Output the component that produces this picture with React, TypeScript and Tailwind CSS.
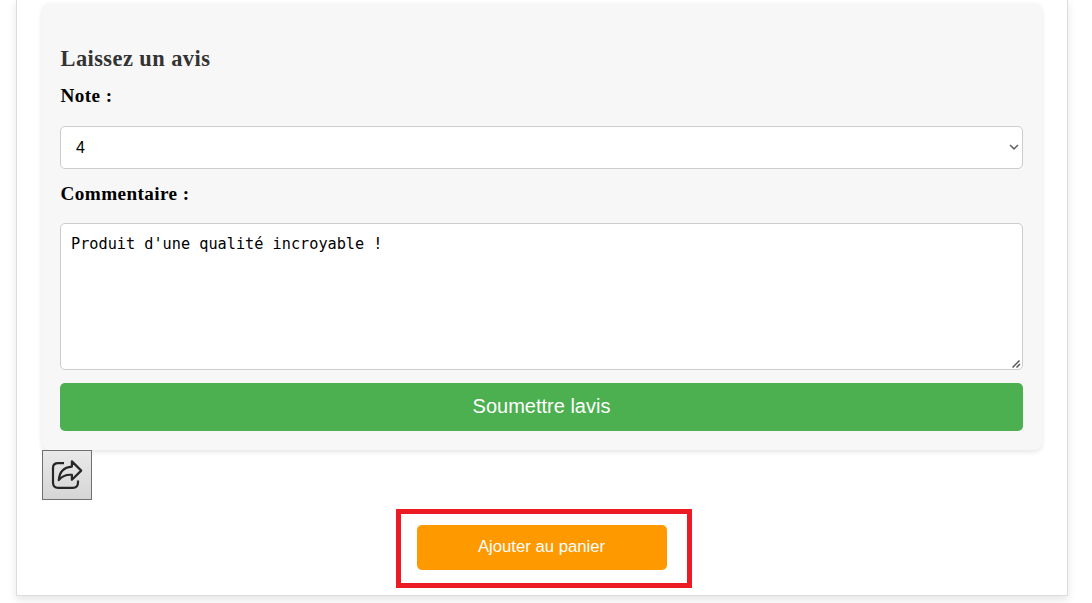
import { useState } from "react";

function ShareIcon() {
  return (
    <svg width="32" height="32" viewBox="0 0 32 32" fill="none" stroke="#262626" strokeWidth="2.2" strokeLinejoin="round" strokeLinecap="butt">
      <path d="M13 4.2H7.2C3.6 4.2 2 6 2 9V23.5C2 27 3.8 28.9 7.2 28.9H21.8C25.3 28.9 27 27 27 23.5V21.5" />
      <path d="M20.9 2.4L30.2 11.6L20.9 20.8V15.8C14.5 15.4 11 17 7.8 21.2C8.4 12.9 12.9 8.2 20.9 7.6Z" />
    </svg>
  );
}

export default function App() {
  const [note, setNote] = useState("4");
  return (
    <div className="h-[603px] overflow-hidden bg-white">
      <main className="ml-4 flex h-[596px] w-[1052px] flex-col border-x border-b border-[#dddddd] bg-white pt-[3px] shadow-[0_4px_8px_rgba(0,0,0,0.1)]">
        <section className="ml-[25px] flex h-[447px] w-[1000px] shrink-0 flex-col rounded-lg bg-[#f7f7f7] pl-[18px] pr-[19px] pt-[42px] shadow-[0_2px_5px_rgba(0,0,0,0.1)]">
          <h3 className="h-[40px] pl-[0.5px] font-['Liberation_Serif',serif] text-[22.4px] font-bold leading-[28px] tracking-[0.45px] text-[#333333]">
            Laissez un avis
          </h3>
          <label className="h-[41px] pl-[0.5px] font-['Liberation_Serif',serif] text-[19.2px] font-bold leading-[22px] tracking-[0.4px] text-black">
            Note :
          </label>
          <div className="grid h-[43px] shrink-0 items-center">
            <select
              value={note}
              onChange={(e) => setNote(e.target.value)}
              className="col-start-1 row-start-1 h-[43px] w-full appearance-none rounded-[5px] border border-[#cccccc] bg-white px-[15px] font-['Liberation_Sans',sans-serif] text-base text-black"
            >
              {["1", "2", "3", "4", "5"].map((n) => (
                <option key={n}>{n}</option>
              ))}
            </select>
            <svg className="pointer-events-none col-start-1 row-start-1 mb-px mr-1 justify-self-end" width="10" height="6" viewBox="0 0 10 6" fill="none" stroke="#666" strokeWidth="1.6">
              <path d="M1 1L5 4.8L9 1" />
            </svg>
          </div>
          <label className="mt-[14px] h-[40px] pl-[0.5px] font-['Liberation_Serif',serif] text-[19.2px] font-bold leading-[22px] tracking-[0.4px] text-black">
            Commentaire :
          </label>
          <div className="grid h-[147px] shrink-0">
            <textarea
              defaultValue="Produit d'une qualité incroyable !"
              className="col-start-1 row-start-1 block h-[147px] w-full resize-none rounded-[5px] border border-[#cccccc] bg-white px-[10px] pb-[10px] pt-[11px] font-['DejaVu_Sans_Mono',monospace] text-[15.23px] leading-[19px] text-black"
            />
            <svg className="pointer-events-none col-start-1 row-start-1 mb-[2px] mr-[2px] self-end justify-self-end" width="9" height="8" viewBox="0 0 9 8" fill="none" stroke="#555" strokeWidth="1.5">
              <path d="M0.5 7.5L7.5 0.5M4.5 7.5L8 4" />
            </svg>
          </div>
          <button className="mt-[13px] h-12 w-full shrink-0 rounded-[5px] bg-[#4caf50] pb-[2px] font-['Liberation_Sans',sans-serif] text-[20px] text-white">
            Soumettre lavis
          </button>
        </section>
        <button aria-label="Partager" className="relative ml-[25px] flex size-[50px] shrink-0 items-center justify-center border border-[#707070] bg-linear-to-b from-[#e9e9e9] to-[#d6d6d6]">
          <ShareIcon />
        </button>
        <div className="ml-[379px] mt-[9px] h-[79px] w-[296px] shrink-0 border-5 border-[#ed1c24] pl-4 pt-[11px]">
          <button className="block h-[45px] w-[250px] rounded-[5px] bg-[#ff9900] pb-[2px] pr-px font-['Liberation_Sans',sans-serif] text-[16.7px] text-white">
            Ajouter au panier
          </button>
        </div>
      </main>
    </div>
  );
}
